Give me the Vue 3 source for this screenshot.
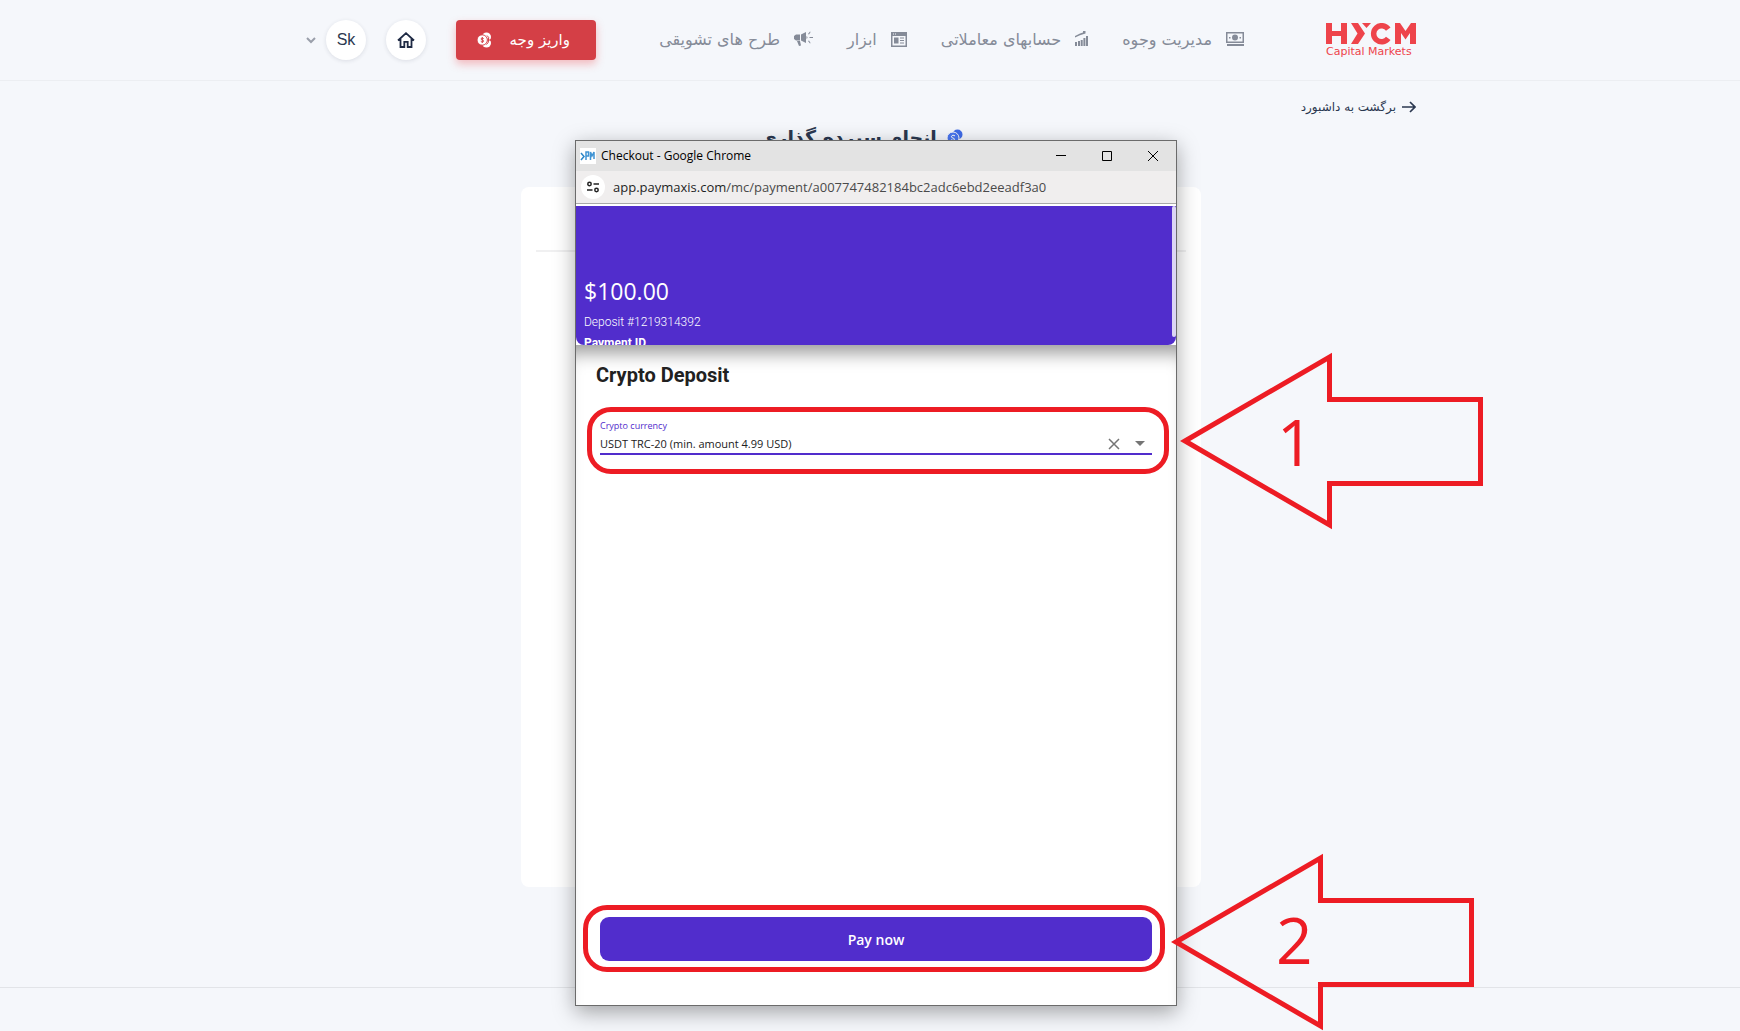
<template>
  <div class="page" dir="rtl">
    <header class="site-header">
      <div class="container header-row">
        <a href="#" class="logo" aria-label="HYCM Capital Markets">
          <svg class="logo-mark" width="90" height="22" viewBox="0 0 90 22" aria-hidden="true">
            <path d="M0 0h6v8h9V0h6v21h-6v-8H6v8H0z" />
            <path d="M25 0h7l7 10.500-7 10.500h-7l6.500-10.500z" />
            <path d="M36 0h9l-4.500 5z" />
            <path d="M64.500 4.500A10.800 10.800 0 1 0 64.500 17l-4.500-3.200a5.300 5.300 0 1 1 0-6.100z" />
            <path d="M69 21V0h5l5.500 8L85 0h5v21h-6v-11l-4.500 6.500L75 10v11z" />
          </svg>
          <span class="logo-text" dir="ltr">Capital Markets</span>
        </a>

        <nav class="main-nav">
          <a v-for="item in navItems" :key="item.label" href="#" class="nav-item">
            <svg :width="item.width" height="16" :viewBox="`0 0 ${item.width} 16`" aria-hidden="true">
              <path :d="item.path" fill-rule="evenodd" />
            </svg>
            <span>{{ item.label }}</span>
          </a>
        </nav>

        <div class="actions">
          <button type="button" class="deposit-btn">
            <span>واریز وجه</span>
            <svg width="15" height="16" viewBox="0 0 15 16" aria-hidden="true">
              <circle cx="9.500" cy="5" r="4.500" fill="#fff" />
              <circle cx="9.500" cy="11" r="4.500" fill="#fff" />
              <path d="M10 3.500q2.500 1.500 1.500 4.500M11.500 8q.5 2.500-2 4.500M11 8h4" fill="none" stroke="#d43f46" />
              <circle cx="5.200" cy="8" r="5.200" fill="#fff" stroke="#d43f46" />
              <path d="M6.700 6.700C5.800 5.800 4 6 4 7s2.700.9 2.700 2-2 1.200-2.900.3M5.300 5v6" fill="none" stroke="#d43f46" />
            </svg>
          </button>
          <button type="button" class="round-btn" aria-label="خانه">
            <svg width="18" height="16" viewBox="0 0 18 16" aria-hidden="true">
              <path d="M1 8.500 9 1.200l8 7.300M3.500 7v8h3.800V9.800h3.400V15h3.800V7" fill="none" stroke="#1f2a44" stroke-width="1.800" />
            </svg>
          </button>
          <button type="button" class="round-btn user-btn">Sk</button>
          <svg class="chevron" width="10" height="7" viewBox="0 0 10 7" aria-hidden="true">
            <path d="M1 1l4 4 4-4" fill="none" stroke="#9a9faa" stroke-width="2" />
          </svg>
        </div>
      </div>
    </header>

    <main class="main">
      <div class="container">
        <a href="#" class="back-link">
          <svg width="14" height="12" viewBox="0 0 14 12" aria-hidden="true">
            <path d="M0 6h13M8 1l5 5-5 5" fill="none" stroke="#2b3850" stroke-width="1.700" />
          </svg>
          <span>برگشت به داشبورد</span>
        </a>
        <h1 class="page-title">
          <svg width="16" height="16" viewBox="0 0 16 16" aria-hidden="true">
            <circle cx="10.500" cy="5.500" r="5" fill="#3f6be8" />
            <circle cx="6" cy="9" r="6" fill="#4a76f0" stroke="#f5f7fb" />
            <path d="M8 7C6.500 5.500 4 6.500 4.500 8s3 .8 3 2.200-2.500 1.500-3.500.4" fill="none" stroke="#fff" />
          </svg>
          <span>انجام سپرده گذاری</span>
        </h1>
        <section class="card">
          <hr />
        </section>
      </div>
    </main>

    <footer class="site-footer"></footer>

    <div class="popup" dir="ltr">
      <div class="title-bar">
        <svg width="16" height="16" viewBox="0 0 16 16" aria-hidden="true">
          <rect width="16" height="16" fill="#fff" />
          <path d="M1 5l3 3.500L1 12" fill="none" stroke="#2b86c8" stroke-width="1.500" />
          <path d="M6 12V4h2.500v4H6M10.500 12V4l1.500 4 2-4v7" fill="none" stroke="#3f93d3" stroke-width="1.500" />
        </svg>
        <span class="window-title">Checkout - Google Chrome</span>
        <button type="button" aria-label="Minimize">
          <svg width="10" height="10" viewBox="0 0 10 10"><path d="M0 4.500h10" /></svg>
        </button>
        <button type="button" aria-label="Maximize">
          <svg width="10" height="10" viewBox="0 0 10 10"><path d="M.5.500h9v9h-9z" /></svg>
        </button>
        <button type="button" aria-label="Close">
          <svg width="10" height="10" viewBox="0 0 10 10"><path d="M0 0l10 10M10 0L0 10" /></svg>
        </button>
      </div>
      <div class="url-bar">
        <span class="site-info">
          <svg width="12" height="12" viewBox="0 0 12 12" aria-hidden="true">
            <path d="M6.500 3H12M0 9h5.500" />
            <circle cx="2.500" cy="3" r="1.700" />
            <circle cx="9.500" cy="9" r="1.700" />
          </svg>
        </span>
        <span class="url"><b>app.paymaxis.com</b>/mc/payment/a007747482184bc2adc6ebd2eeadf3a0</span>
      </div>

      <div class="summary">
        <p class="amount">$100.00</p>
        <p class="deposit-id">Deposit #1219314392</p>
        <p class="payment-id">Payment ID</p>
        <i class="scroll-thumb"></i>
      </div>

      <form class="checkout" @submit.prevent>
        <h2>Crypto Deposit</h2>
        <div class="field">
          <label for="currency">Crypto currency</label>
          <div class="select-row">
            <select id="currency" v-model="currency">
              <option v-for="c in currencies" :key="c">{{ c }}</option>
            </select>
            <button type="button" class="clear-btn" aria-label="Clear" @click="currency = ''">
              <svg width="12" height="12" viewBox="0 0 12 12"><path d="M1 1l10 10M11 1L1 11" /></svg>
            </button>
            <svg class="caret" width="10" height="5" viewBox="0 0 10 5" aria-hidden="true">
              <path d="M0 0h10L5 5z" />
            </svg>
          </div>
        </div>
        <button type="submit" class="pay-btn">Pay now</button>
      </form>

      <div v-for="step in 2" :key="step" class="step" :class="`step-${step}`">
        <div class="outline"></div>
        <svg class="arrow" width="304" height="178" viewBox="0 0 304 178" aria-hidden="true">
          <path d="M5 89 149.500 5v42.500h151v84h-151V173z" />
        </svg>
        <span class="number">{{ step }}</span>
      </div>
    </div>
  </div>
</template>

<script setup>
import { ref } from "vue";

const navItems = [
  {
    label: "مدیریت وجوه",
    width: 18,
    path: "M0 1h18v11H0zM1.500 2.500v8h15v-8zM9 3.500a3 3 0 1 1 0 6 3 3 0 0 1 0-6M3 6h1.500v1.500H3zM13.500 6H15v1.500h-1.500zM1 13h17v2H1z",
  },
  {
    label: "حسابهای معاملاتی",
    width: 13,
    path: "M0 11h2v4H0zM3 10h2v5H3zM5.700 9h2v6h-2zM8.400 7h2v8h-2zM11 5h2v10h-2zM0 5 5 2.600 8 1.500V0h2.500v2.500L5 4.200 0 6.500z",
  },
  {
    label: "ابزار",
    width: 16,
    path: "M0 1h16v15H0zM1.500 5v9.500h13V5zM3 6.500h4.500v6H3zM9 6.500h4v1H9zM9 9h4v1H9zM9 11.500h4v1H9zM2 2.500v1h1v-1zM4 2.500v1h1v-1z",
  },
  {
    label: "طرح های تشویقی",
    width: 19,
    path: "M12 1v11L7 9.500V3.500zM6 3.500v6H2L0 8V5l2-1.500zM3 10h3l1 4.500-2 .5zM12.500 5q2 1.500 0 3zM14 3l2-2.500.6.500L15 3.600zM15.500 6H19v1h-3.500zM14 10l2 2.500.6-.5L15 9.500z",
  },
];

const currencies = ["USDT TRC-20 (min. amount 4.99 USD)"];
const currency = ref(currencies[0]);
</script>

<style>
body {
  margin: 0;
  background: #f5f7fb;
}
</style>

<style scoped>
.page {
  position: relative;
  display: flex;
  flex-direction: column;
  min-height: 100vh;
  overflow: hidden;
  background: #f5f7fb;
  color: #2b3850;
  font-family: "DejaVu Sans", sans-serif;
}
* {
  box-sizing: border-box;
}
a {
  color: inherit;
  text-decoration: none;
}
button {
  padding: 0;
  border: 0;
  background: none;
  font: inherit;
  color: inherit;
  cursor: pointer;
}
.container {
  width: 100%;
  max-width: 1110px;
  margin: 0 auto;
}
.site-header {
  padding-right: 18px;
  border-bottom: 1px solid #eceef2;
}
.header-row {
  display: flex;
  align-items: center;
  height: 80px;
}
.logo {
  display: flex;
  flex-direction: column;
  width: 90px;
  margin-left: 82px;
  padding-top: 2px;
}
.logo-mark {
  fill: #ee444b;
}
.logo-text {
  color: #ee444b;
  font-size: 11px;
  line-height: 14px;
  white-space: nowrap;
}
.main-nav {
  display: flex;
  gap: 34px;
  padding-bottom: 2px;
  color: #858b98;
  font-size: 16px;
}
.nav-item {
  display: flex;
  align-items: center;
  gap: 14px;
  white-space: nowrap;
}
.nav-item svg {
  fill: #858b98;
}
.actions {
  display: flex;
  align-items: center;
  margin-right: auto;
}
.deposit-btn {
  display: flex;
  align-items: center;
  gap: 18px;
  width: 140px;
  height: 40px;
  margin-left: 30px;
  padding-right: 26px;
  border-radius: 4px;
  background: #d43f46;
  box-shadow: 0 4px 8px rgba(238, 68, 75, 0.35);
  color: #fff;
  font-size: 15px;
}
.round-btn {
  display: flex;
  align-items: center;
  justify-content: center;
  width: 40px;
  height: 40px;
  margin-left: 20px;
  border-radius: 50%;
  background: #fff;
  box-shadow: 0 1px 4px rgba(31, 42, 68, 0.12);
}
.user-btn {
  margin-left: 10px;
  font: 16px "Liberation Sans", sans-serif;
}
.main {
  flex: 1;
  padding: 17px 18px 0 0;
}
.back-link {
  display: flex;
  align-items: center;
  gap: 6px;
  width: max-content;
  height: 18px;
  font-size: 12px;
}
.page-title {
  display: flex;
  align-items: center;
  justify-content: center;
  gap: 10px;
  height: 36px;
  margin: 3px 0 32px;
  font-size: 19px;
}
.card {
  width: 680px;
  height: 700px;
  margin: 0 auto;
  padding: 63px 15px 0;
  border-radius: 8px;
  background: #fff;
}
.card hr {
  height: 2px;
  margin: 0;
  border: 0;
  background: #f0f0f1;
}
.site-footer {
  height: 44px;
  border-top: 1px solid #e2e4e8;
}

/* payment window */
.popup {
  position: absolute;
  top: 140px;
  left: calc(50% - 295px);
  display: flex;
  flex-direction: column;
  width: 602px;
  height: 866px;
  border: 1px solid #6b6b6b;
  background: #fff;
  box-shadow: 0 6px 20px rgba(0, 0, 0, 0.35);
  color: #212121;
  font-family: "Open Sans", sans-serif;
}
.title-bar {
  display: flex;
  align-items: center;
  height: 30px;
  padding-left: 4px;
  background: #e3e3e3;
  color: #000;
  font-size: 12px;
}
.window-title {
  flex: 1;
  margin-left: 5px;
  padding-bottom: 2px;
}
.title-bar button {
  width: 46px;
  height: 30px;
}
.title-bar button path {
  fill: none;
  stroke: #000;
}
.url-bar {
  display: flex;
  align-items: center;
  gap: 8px;
  height: 33px;
  padding-left: 5px;
  border-bottom: 1px solid #a9a9a9;
  background: #f0eeee;
  color: #4a4a4a;
  font-size: 13px;
}
.url b {
  color: #1f1f1f;
  font-weight: 400;
}
.site-info {
  display: flex;
  align-items: center;
  justify-content: center;
  width: 24px;
  height: 24px;
  border-radius: 50%;
  background: #fff;
}
.site-info path,
.site-info circle {
  fill: none;
  stroke: #222;
  stroke-width: 1.5;
}
.summary {
  position: relative;
  height: 139px;
  margin-top: 2px;
  padding: 69px 8px 0;
  overflow: hidden;
  border-radius: 0 0 8px 8px;
  background: #512dcc;
  color: #fff;
  flex-shrink: 0;
}
.summary p {
  margin: 0;
}
.amount {
  font-size: 23px;
  line-height: 32px;
}
.summary .deposit-id {
  margin-top: 5px;
  font: 300 12px/20px Roboto, sans-serif;
}
.payment-id {
  font: 700 12px/22px Roboto, sans-serif;
}
.scroll-thumb {
  position: absolute;
  top: 0;
  right: 0;
  width: 4px;
  height: 131px;
  border-radius: 2px;
  background: #dcd5f5;
}
.checkout {
  display: flex;
  flex: 1;
  flex-direction: column;
  padding: 16px 24px 44px;
  box-shadow: inset 0 20px 18px -12px rgba(0, 0, 0, 0.4);
}
.checkout h2 {
  margin: 0 -4px;
  font: 700 20px/28px Roboto, sans-serif;
}
.field {
  margin-top: 29px;
  border-bottom: 2px solid #512dcc;
}
.field label {
  display: block;
  color: #512dcc;
  font-size: 9px;
  line-height: 16px;
}
.select-row {
  display: flex;
  align-items: center;
  height: 19px;
}
.select-row select {
  flex: 1;
  height: 18px;
  padding: 0;
  border: 0;
  outline: none;
  background: none;
  appearance: none;
  color: #212121;
  font: 11px/18px "Open Sans", sans-serif;
}
.clear-btn {
  display: flex;
  margin-right: 15px;
}
.clear-btn path {
  fill: none;
  stroke: #757575;
  stroke-width: 1.5;
}
.caret {
  margin-right: 7px;
  fill: #757575;
}
.pay-btn {
  height: 44px;
  margin-top: auto;
  border-radius: 9px;
  background: #512dcc;
  color: #fff;
  font-size: 14px;
  font-weight: 600;
}

/* numbered callouts drawn over the window */
.step {
  position: absolute;
  left: 11px;
  top: 266px;
  pointer-events: none;
}
.step-2 {
  left: 7px;
  top: 764px;
}
.outline {
  width: 582px;
  height: 67px;
  border: 5px solid #ed1c24;
  border-radius: 24px;
}
.arrow {
  position: absolute;
  left: 593px;
  top: -55px;
}
.arrow path {
  fill: none;
  stroke: #ed1c24;
  stroke-width: 5;
  stroke-miterlimit: 10;
}
.number {
  position: absolute;
  left: 690px;
  top: -9px;
  color: #ed1c24;
  font-size: 64px;
  line-height: 88px;
}
.step-2 .arrow {
  left: 588px;
  top: -52px;
}
.step-2 .number {
  left: 693px;
}
</style>
